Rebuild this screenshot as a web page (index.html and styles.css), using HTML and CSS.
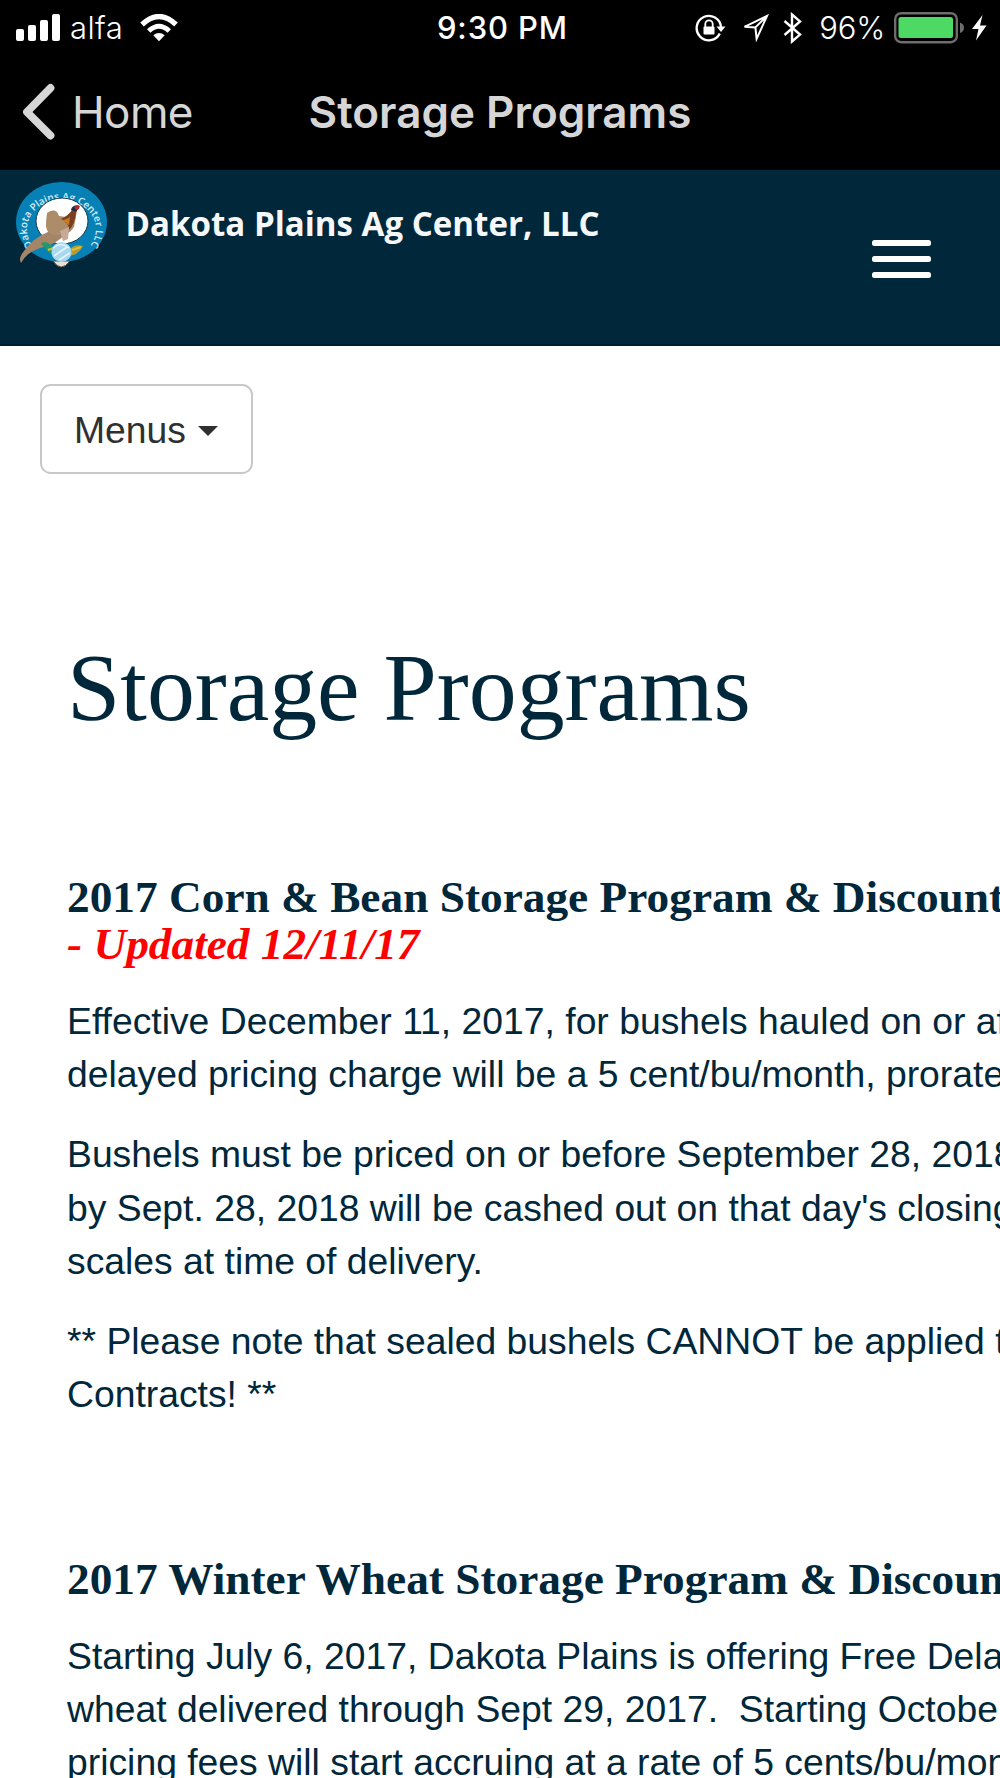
FILE: index.html
```html
<!DOCTYPE html>
<html lang="en">
<head>
    <meta charset="UTF-8">
    <meta name="viewport" content="width=device-width, initial-scale=1.0">
    <title>Storage Programs</title>
    <link rel="stylesheet" href="styles.css">
</head>
<body>
    <div class="status-bar">
        <div class="status-left">
            <svg class="signal" width="45" height="28" viewBox="0 0 45 28" fill="#fff">
                <rect x="0" y="15" width="8" height="12" rx="2"/>
                <rect x="12" y="11" width="8" height="16" rx="2"/>
                <rect x="24" y="6" width="8" height="21" rx="2"/>
                <rect x="36" y="0" width="8" height="27" rx="2"/>
            </svg>
            <span class="carrier">alfa</span>
            <svg class="wifi" width="38" height="28" viewBox="0 0 38 28">
                <path d="M2 10.5 Q19 -5.5 36 10.5" fill="none" stroke="#fff" stroke-width="5.2"/>
                <path d="M8.7 17 Q19 7.5 29.3 17" fill="none" stroke="#fff" stroke-width="5"/>
                <path d="M13.3 21.3 Q19 16.7 24.7 21.3 L19 27.2 Z" fill="#fff"/>
            </svg>
        </div>
        <span class="time">9:30 PM</span>
        <div class="status-right">
            <svg class="lock" width="31" height="28" viewBox="0 0 31 28">
                <path d="M24.8 19.5 A12.2 12.2 0 1 1 26 13" fill="none" stroke="#fff" stroke-width="2.3"/>
                <path d="M21.5 12.5 H30.5 L26 18 Z" fill="#fff"/>
                <rect x="8.5" y="12.5" width="11" height="8" rx="1" fill="#fff"/>
                <path d="M10.3 13 V10 a3.7 3.7 0 0 1 7.4 0 V13" fill="none" stroke="#fff" stroke-width="1.8"/>
            </svg>
            <svg class="location" width="27" height="28" viewBox="0 0 27 28">
                <path d="M25 2 L2.5 12.8 L13.4 13.4 L14.6 24.8 Z M25 2 L13.4 13.4" fill="none" stroke="#fff" stroke-width="2"/>
            </svg>
            <svg class="bluetooth" width="20" height="32" viewBox="0 0 20 32">
                <path d="M1.5 9 L17 22.6 L9 29.5 V2.5 L17 9.4 L1.5 23" fill="none" stroke="#fff" stroke-width="2.4"/>
            </svg>
            <span class="percent">96%</span>
            <svg class="battery" width="70" height="32" viewBox="0 0 70 32">
                <rect x="1.2" y="1.2" width="61.6" height="29" rx="6" fill="none" stroke="#6d6d6d" stroke-width="2.4"/>
                <rect x="4.5" y="5" width="54.5" height="21" rx="2.5" fill="#4cd964"/>
                <path d="M66 10.5 Q70 12 70 15.7 Q70 19.5 66 21 Z" fill="#6d6d6d"/>
            </svg>
            <svg class="bolt" width="17" height="28" viewBox="0 0 17 28">
                <path d="M11.5 1 L1 15 H7.5 L5 26.5 L15.5 11.5 H9 Z" fill="#fff"/>
            </svg>
        </div>
    </div>

    <div class="nav-bar">
        <a class="back">
            <svg width="33" height="58" viewBox="0 0 33 58">
                <path d="M28.5 5 L5 29 L28.5 52.5" fill="none" stroke="#d6d6d6" stroke-width="7.8" stroke-linecap="round" stroke-linejoin="round"/>
            </svg>
            <span>Home</span>
        </a>
        <span class="nav-title">Storage Programs</span>
    </div>

    <div class="site-header">
        <svg class="logo" width="620" height="120" viewBox="0 0 620 120">
            <defs>
                <path id="ring" d="M33 76 A34.5 29.5 0 1 1 86 80"/>
            </defs>
            <ellipse cx="61.5" cy="52" rx="45.5" ry="40" fill="#0781b5"/>
            <text class="ring-text"><textPath href="#ring">Dakota Plains Ag Center LLC</textPath></text>
            <ellipse cx="62" cy="51" rx="26" ry="23" fill="#fff" stroke="#173a4b" stroke-width="1"/>
            <!-- pheasant -->
            <path d="M50 61 Q33 68 24 81 Q18 88 21 93 Q26 83 40 78 Q58 74 66 63 Z" fill="#a58567"/>
            <path d="M47 43 Q56 37 59 46 L66 47 Q72 45 72 38 L77 40 Q76 48 74 57 Q69 65 60 65 Q46 66 46 55 Q46 50 47 43 Z" fill="#ad8c69"/>
            <path d="M61 49 Q69 45 72 40 L76 42 Q75 55 69 60 Q69 53 61 49 Z" fill="#7a3f20"/>
            <path d="M62 50 Q69 49 70 46 L69 55 Z" fill="#c77c24"/>
            <path d="M71 40 Q72 34 80 36 L76 42 Z" fill="#252a3b"/>
            <circle cx="77" cy="37.5" r="2.4" fill="#b3293d"/>
            <path d="M60 61 L69 57 L68 69 L63 71 Z" fill="#c7a999"/>
            <!-- corn, elevator and wheat -->
            <path d="M41 73 Q47 70 54 78 L56 86 Q48 85 41 73 Z" fill="#20986c"/>
            <path d="M68 81 Q74 73 83 76 Q78 86 67 86 Z" fill="#b39a37"/>
            <path d="M48 80 L54 78 M72 80 L81 77" stroke="#d8be3a" stroke-width="2"/>
            <path d="M53 91 Q61 103 70 91 Z" fill="#e8e0d8" stroke="#55504a" stroke-width="1"/>
            <ellipse cx="61.5" cy="82" rx="10" ry="10" fill="#a9d8ef"/>
            <path d="M53 78 Q61 71 69 78 M54 86 L67 77 M59 90 L70 83" fill="none" stroke="#e4f5fb" stroke-width="1.6"/>
            <text class="logo-text" x="125.5" y="66" textLength="474" lengthAdjust="spacingAndGlyphs">Dakota Plains Ag Center, LLC</text>
        </svg>
        <div class="hamburger">
            <span></span>
            <span></span>
            <span></span>
        </div>
    </div>

    <button class="menus-btn">Menus <span class="caret"></span></button>

    <div class="content">
        <h1>Storage Programs</h1>

        <h3>2017 Corn &amp; Bean Storage Program &amp; Discount<br><em>- Updated 12/11/17</em></h3>
        <p>Effective December 11, 2017, for bushels hauled on or af<br>
        delayed pricing charge will be a 5 cent/bu/month, prorate</p>
        <p>Bushels must be priced on or before September 28, 2018<br>
        by Sept. 28, 2018 will be cashed out on that day's closing<br>
        scales at time of delivery.</p>
        <p>** Please note that sealed bushels CANNOT be applied t<br>
        Contracts! **</p>

        <h3>2017 Winter Wheat Storage Program &amp; Discoun</h3>
        <p>Starting July 6, 2017, Dakota Plains is offering Free Dela<br>
        wheat delivered through Sept 29, 2017.&nbsp; Starting Octobe<br>
        pricing fees will start accruing at a rate of 5 cents/bu/mon</p>
    </div>
</body>
</html>
```

FILE: styles.css
```css
* {
    box-sizing: border-box;
}

body {
    margin: 0;
    width: 1000px;
    height: 1778px;
    overflow: hidden;
    background: #fff;
    color: #01273a;
    font-family: "Liberation Sans", Arial, sans-serif;
    font-size: 37.3px;
    line-height: 53.33px;
}

svg {
    display: block;
    flex-shrink: 0;
}

/* phone bars */
.status-bar {
    display: grid;
    grid-template-columns: 1fr auto 1fr;
    height: 54px;
    padding: 0 12px 0 16px;
    background: #000;
    color: #fff;
    font-family: Inter, sans-serif;
    font-size: 31px;
    line-height: 54px;
}

.status-left,
.status-right {
    display: flex;
    align-items: center;
}

.status-right {
    justify-content: flex-end;
}

.carrier {
    margin-left: 9px;
    font-weight: 350;
    letter-spacing: 0.4px;
}

.wifi {
    margin-left: 17px;
}

.time {
    padding: 1px 0 0 1px;
    font-weight: 500;
    letter-spacing: 0.9px;
}

.location {
    margin-left: 16px;
}

.bluetooth {
    margin-left: 14px;
}

.percent {
    margin-left: 16px;
    font-weight: 350;
    letter-spacing: -0.2px;
}

.battery {
    margin-left: 9px;
}

.bolt {
    margin-left: 7px;
}

.nav-bar {
    display: grid;
    grid-template-columns: 1fr auto 1fr;
    align-items: center;
    height: 116px;
    padding: 0 20px 0 22px;
    background: #000;
    color: #d6d6d6;
    font-family: Inter, sans-serif;
    font-size: 44px;
}

.back {
    display: flex;
    align-items: center;
    gap: 17px;
    font-weight: 380;
    letter-spacing: -0.6px;
}

.nav-title {
    margin-left: -2px;
    font-weight: 600;
}

.back span,
.nav-title {
    padding-top: 2px;
}

/* site header */
.site-header {
    display: flex;
    justify-content: space-between;
    height: 176px;
    padding-right: 69px;
    background: #01273a;
    border-bottom: 2px solid #011c33;
}

.ring-text {
    fill: #d4edf5;
    font-family: "Open Sans", sans-serif;
    font-size: 10px;
    font-weight: 600;
}

.logo-text {
    fill: #f5f7f8;
    font-family: "Open Sans", sans-serif;
    font-size: 34.5px;
    font-weight: 700;
}

.hamburger {
    display: flex;
    flex-direction: column;
    gap: 10.5px;
    width: 59px;
    padding-top: 70px;
}

.hamburger span {
    height: 5.5px;
    border-radius: 2.5px;
    background: #fff;
}

.menus-btn {
    display: flex;
    align-items: center;
    width: 213px;
    height: 90px;
    margin: 38px 0 0 40px;
    padding: 3px 0 0 32px;
    border: 2.67px solid #c8c8c8;
    border-radius: 10.67px;
    background: #fff;
    color: #303030;
    font: inherit;
}

.caret {
    margin-left: 12px;
    border-top: 10.67px solid #303030;
    border-left: 10.67px solid transparent;
    border-right: 10.67px solid transparent;
}

/* page text */
.content {
    margin-top: 162px;
    padding-left: 67px;
    white-space: nowrap;
}

h1,
h3 {
    font-family: "Liberation Serif", "Times New Roman", serif;
}

h1 {
    margin: 0;
    font-size: 95.8px;
    font-weight: 400;
    line-height: 105.6px;
}

h3 {
    margin: 132px 0 26.5px;
    font-size: 45.33px;
    font-weight: 700;
    line-height: 47.5px;
}

p + h3 {
    margin-top: 134px;
}

h3 em {
    color: #f00;
}

p {
    margin: 0 0 26.67px;
}
```
